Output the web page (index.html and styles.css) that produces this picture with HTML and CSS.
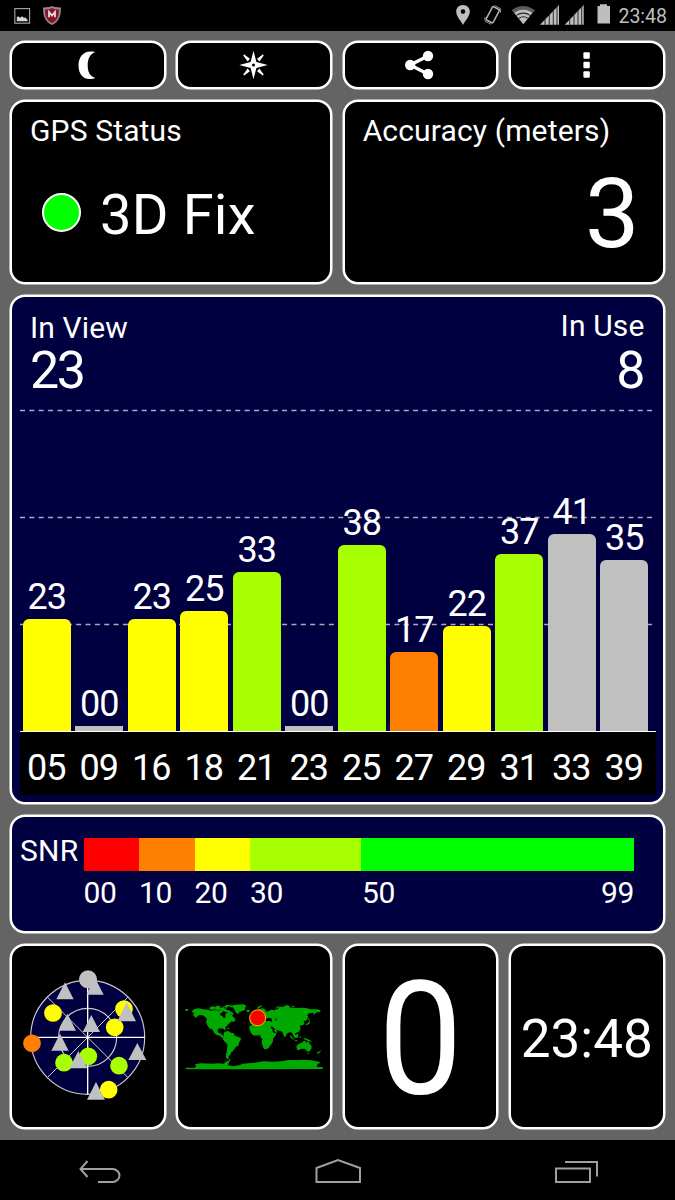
FILE: index.html
```html
<!DOCTYPE html>
<html lang="en">
<head>
<meta charset="utf-8">
<title>GPS Test</title>
<link rel="stylesheet" href="styles.css">
</head>
<body>
<header class="status">
  <svg class="status-left" width="70" height="31" viewBox="0 0 70 31">
    <rect x="14.800" y="8.600" width="14.800" height="14.600" fill="none" stroke="#a8a8a8" stroke-width="1.100"/>
    <path d="M16.800 21.300V17.200l1.300-1 2 1.600 2-1.500 1.700 1.400 1.700-.2 1.300 1.700.8.2v1.900z" fill="#d5d5d5"/>
    <path d="M52 6l2.600 1.100 6.300.3c.3 8.600-2.100 14.200-8.900 17.700-6.800-3.500-9.200-9.100-8.900-17.700l6.300-.3z" fill="#8e8e90"/>
    <path d="M52 8l2.400 1 4.700.4c0 7-2 11-7.100 13.900-5.100-2.900-7.100-6.900-7.100-13.900l4.700-.4z" fill="#8c1428"/>
    <path d="M49 17.200v-5.200l3 3.500 3-3.500v5.200" fill="none" stroke="#ddd" stroke-width="1.800"/>
  </svg>
  <svg class="status-right" width="170" height="31" viewBox="450 0 170 31" fill="#bebebe">
    <path fill-rule="evenodd" d="M463 5c4 0 6.800 2.900 6.800 6.500 0 4.800-4.600 9.200-6.800 13.400-2.200-4.200-6.800-8.600-6.800-13.400C456.200 7.900 459 5 463 5zm0 4.300a2.300 2.300 0 1 0 0 4.600 2.300 2.300 0 0 0 0-4.600z"/>
    <g fill="none" stroke="#b4b4b4">
      <rect x="488.900" y="7.200" width="7.800" height="15" rx="1.200" transform="rotate(28 492.800 14.700)" stroke-width="1.500"/>
      <path d="M494.500 5.500l6 3.200v4M493.500 6.900l5.600 3M485 17v4l6 3.300M486.500 20l5.600 3.300" stroke-width=".8"/>
    </g>
    <path d="M511.500 10.200Q523 1.600 535 10.200L532.600 13Q523 6.200 514 13z" fill="#5b5b5b"/>
    <path d="M514 12.800Q523.300 6.200 532.600 12.800L523.300 24.200z"/>
    <path d="M516.400 15.400q6.900-4.600 13.800 0M519 18.200q4.300-2.800 8.600 0" fill="none" stroke="#222" stroke-width="1.100"/>
    <path d="M540 24.800L559 5v19.800zM564.700 24.800L583.700 5v19.800z"/>
    <path d="M545 17v8M549.300 13v12M553.300 10v15M557 6v19M569.700 17v8M574 13v12M578 10v15M581.700 6v19" stroke="#1b1b1b" stroke-width=".9"/>
    <path d="M597.500 6h2.500V4.200h7V6h3v17.500h-12.500z"/>
  </svg>
  <span class="clock">23:48</span>
</header>

<main class="screen">
  <nav class="row tools">
    <button class="card tool" aria-label="Night mode"><svg width="30" height="30" viewBox="0 0 30 30"><path d="M18 1.500C11 1 5.500 6.500 5.500 15.500S11 30 18 29c1.500 0 3-.3 4.200-1C16.500 26 14.700 21.500 14.700 15.300S16.700 4 22 2.200C20.700 1.600 19.500 1.500 18 1.500z"/></svg></button>
    <button class="card tool" aria-label="Compass"><svg width="30" height="30" viewBox="0 0 30 30"><path fill-rule="evenodd" d="M14.500 .8l2.900 11.300L28.700 15l-11.300 2.900L14.500 29.200l-2.900-11.300L.3 15l11.300-2.900zM14.500 13.500a1.500 1.500 0 1 0 0 3 1.500 1.500 0 0 0 0-3z"/><path d="M4.800 5l5.200 3.800-1.300 1.700zM24.200 5L19 8.800l1.300 1.700zM4.800 25l5.200-3.800-1.300-1.700zM24.200 25L19 21.200l1.300-1.700z" stroke="#fff" stroke-width="1.300"/></svg></button>
    <button class="card tool" aria-label="Share"><svg width="30" height="30" viewBox="0 0 30 30"><path d="M23 6L5 15l18 9" fill="none" stroke="#fff" stroke-width="3.400"/><circle cx="23" cy="6" r="5.200"/><circle cx="5.200" cy="15" r="5.200"/><circle cx="23" cy="24" r="5.200"/></svg></button>
    <button class="card tool" aria-label="More"><svg width="30" height="30" viewBox="0 0 30 30"><rect x="11.400" y="2.200" width="6.400" height="6.600" rx="1"/><rect x="11.400" y="11.700" width="6.400" height="6.600" rx="1"/><rect x="11.400" y="21.200" width="6.400" height="6.600" rx="1"/></svg></button>
  </nav>

  <div class="row halves">
    <section class="card fix">
      <h2 class="label">GPS Status</h2>
      <div class="fix-line"><i class="dot"></i><span class="fix-text">3D Fix</span></div>
    </section>
    <section class="card accuracy">
      <h2 class="label">Accuracy (meters)</h2>
      <div class="accuracy-value">3</div>
    </section>
  </div>

  <section class="card signal">
    <div class="counts">
      <div class="count in-view"><span class="label">In View</span><b>23</b></div>
      <div class="count in-use"><span class="label">In Use</span><b>8</b></div>
    </div>
    <div class="chart">
      <svg class="grid-lines" width="635" height="322" viewBox="0 0 635 322"><path d="M0 1.500H635M0 108.500H635M0 215.500H635"/></svg>
      <div class="bars">
        <div class="sat"><span>23</span><i class="bar yellow" style="height:112px"></i></div>
        <div class="sat"><span>00</span><i class="bar gray flat" style="height:5px"></i></div>
        <div class="sat"><span>23</span><i class="bar yellow" style="height:112px"></i></div>
        <div class="sat"><span>25</span><i class="bar yellow" style="height:120px"></i></div>
        <div class="sat"><span>33</span><i class="bar lime" style="height:159px"></i></div>
        <div class="sat"><span>00</span><i class="bar gray flat" style="height:5px"></i></div>
        <div class="sat"><span>38</span><i class="bar lime" style="height:186px"></i></div>
        <div class="sat"><span>17</span><i class="bar orange" style="height:79px"></i></div>
        <div class="sat"><span>22</span><i class="bar yellow" style="height:105px"></i></div>
        <div class="sat"><span>37</span><i class="bar lime" style="height:177px"></i></div>
        <div class="sat"><span>41</span><i class="bar gray" style="height:197px"></i></div>
        <div class="sat"><span>35</span><i class="bar gray" style="height:171px"></i></div>
      </div>
    </div>
    <div class="ids"><span>05</span><span>09</span><span>16</span><span>18</span><span>21</span><span>23</span><span>25</span><span>27</span><span>29</span><span>31</span><span>33</span><span>39</span></div>
  </section>

  <section class="card snr">
    <span class="snr-title">SNR</span>
    <div class="scale">
      <i class="red"></i><i class="orange"></i><i class="yellow"></i><i class="lime"></i><i class="green"></i>
      <span>00</span><span>10</span><span>20</span><span>30</span><span class="ends">50<em>99</em></span>
    </div>
  </section>

  <div class="row bottom">
    <section class="card tile">
      <svg class="sky" width="140" height="160" viewBox="0 0 420 480">
        <g fill="none" stroke="#c8c8cc" stroke-width="3.500">
          <circle cx="203" cy="247" r="171" fill="#000040"/>
          <circle cx="203" cy="247" r="87"/>
          <path d="M82 126L324 368M324 126L82 368" stroke-width="3"/>
          <path d="M203 76V418M32 247H374" stroke="#fff" stroke-width="4"/>
        </g>
        <g fill="#c0c0c0">
          <path d="M135 82l26 51h-52zM225 68l26 51h-52zM142 176l26 51h-52zM214 180l26 51h-52zM120 236l26 51h-52z"/>
          <circle cx="204" cy="73" r="27"/>
        </g>
        <g fill="#ff0"><circle cx="99" cy="174" r="26.500"/><circle cx="312" cy="162" r="26.500"/><circle cx="284" cy="217" r="26.500"/><circle cx="266" cy="404" r="26.500"/></g>
        <g fill="#a8ff00"><circle cx="132" cy="323" r="26.500"/><circle cx="205" cy="304" r="26.500"/><circle cx="297" cy="332" r="26.500"/></g>
        <circle cx="36" cy="265" r="26.500" fill="#ff8000"/>
        <path d="M320 142l28 57h-56zM175 288l27 52h-54zM352 264l27 51h-54zM228 381l27 53h-54z" fill="#c0c0c0"/>
      </svg>
    </section>
    <section class="card tile">
      <svg class="map" width="138" height="70" viewBox="30 55 414 210">
        <g fill="#00a800">
          <path d="M31 76h9l-3 6h-6zM50 82l8-5 12-3 14 3 16 1 8 3 14-2 12 2 4-6 8 3-3 7-6 3-2 6 8 4 4 6 5-4-2-10 8-2 7 5 5-1 4 7 8 7-4 3 4 3-8 3-4-2-6 5-6 6-7 7 1 8-3 1-4-7-8 2-5-1-4 5 1 7 6 4 5-4-1 7 6 2 0 7 5 3-2 2-9-6-4-5-9-2-8-5-3-7-7-9-1 5-6-7-4-6-4-9 3-9-5-7-8-5-10-1-9 7-9 3 5-5-7-5 5-3z"/>
          <path d="M103 72l8-4 11 2 4-4 12 1-5 4 7 1 5-4 2 6 9 1-4 5 9 2-7 4-10-4-3-5-11 3-10-3-9 2-8-3zM146 70l8-6 18-1-12 5-5 5zM150 78l12 2 10 6 5 6-6 2-5-3-3 4-8-5 3-4-8-3zM164 67l18-4 24-1 8 4-4 7 1 5-9 4-9 2-4 7-5-2-5-10-5-8-10-1zM214 80l5-2 7 3-5 4-6-1z"/>
          <path d="M146 147l8-4 8 0 6 4 8 2 4 7 11 4 7 3-1 6-5 8-2 9-8 4-4 7-6 7-3 1-2 7-5 4-2 7 3 3-6 0-5-5 2-12 3-19 0-9-8-7-6-9 3-7z"/>
          <path d="M132 132l8-1 8 3 4 3-7-1-5-3zM154 132l8 1 3 3-8-1z"/>
          <path d="M222 132l4-6 8-5 10-1 10 0 6 5 9-2 9 3 6 0 2 6 5 9 6 7 8-1-3 8-8 10 0 8-6 6-3 8-5 7-7 3-6-1-5-11-2-11 2-7-5-7-1-5-8 0-7 1-8-2-6-8zM287 175l5-6 1 6-5 9-4 0zM279 122l12-2 7 7 6 3-2 7-11 4-6-8zM223 110l8 0 6 4-2 7-9-1z"/>
          <path d="M226 104l5-8 6-6 8-4 3-6 7-5 9-1 8 5 2 5 7-1 7-5 9 2 11-4 5-6 12-1 10-5 9 3-1 4 12 1 14 1 12-1 15 2 12 3 19 0 10 3-2 5-8 0-6 4-5 5-1-7-11 2-7 4 2 7-3 8-6 4-5-1 4 8-5 6-7-1-2 6 2 7-6 8-9 3-2 4 6 7-4 5-5-4-2-6-6-8-9 1-6 5-2 9-5-3-5-13-8-4-10-2 4 8-7-2-7-9 1-5-9-2-5 4-6 2-8-1-7-7-7 6 0-6-8 2-5 4-7-2z"/>
          <path d="M245 77l4-7 8-5-3 8zM251 67l8-1 4 2-8 2zM300 75l6-6 12-2-11 6zM347 66l9 1 5 3-9-1zM401 101l3 7-4 2zM391 122l8-4 5-8 1 8-9 7zM345 154l9 9 4 6-5-2-8-8zM359 169l9 1-2 3-7-2zM361 155l5-5 5 5-3 8-6-2zM373 145l3 6-2 1zM372 160l8-1-4 5zM384 163l8 1 14 6 4 5-10-3-9-3z"/>
          <path d="M364 187l8-7 7-2 7-6 6 1 2 5 6-7 3 8 7 8-1 10-7 7-6-1-6-7-10-1-8 4-6-1zM396 207l7 0-2 5zM424 207l10-4 3-4-1 7-9 4z"/>
          <path d="M32 257v-5h27l5-5-4-5 18-3 35 1 18-1 14 2 8-7 7-3 3-4 4 1-6 9-2 8 15 3 18-3 12-5 35-3 26-4 30 1 25-1 20-4 20 0 25-1 25 2 22 4 4 3-9 5-1 8h17v6z"/>
        </g>
        <path d="M271 105l12-3 7 3 1 9-10-3-10 2zM287 132l9 8 5-2-11-10zM303 102l3 9-5-2z" fill="#000"/>
        <circle cx="248" cy="102.500" r="24" fill="red" stroke="#f4c400" stroke-width="3"/>
      </svg>
    </section>
    <section class="card tile speed"><span>0</span></section>
    <section class="card tile time">23:48</section>
  </div>
</main>

<footer class="navbar">
  <svg width="46" height="28" viewBox="77 1157 46 28"><path d="M87.500 1161l-7 8 7 8M80.500 1169H112.500a7 6.500 0 0 1 0 13H98"/></svg>
  <svg width="48" height="28" viewBox="314 1157 48 28"><path d="M316.500 1182V1168L338 1160l22 8V1182z"/></svg>
  <svg width="48" height="28" viewBox="552 1157 48 28"><path d="M556 1168.500H590V1182H556zM565 1162H597V1176.500"/></svg>
</footer>
</body>
</html>
```

FILE: styles.css
```css
* { box-sizing: border-box; }

body {
  margin: 0;
  width: 675px;
  height: 1200px;
  background: #000;
  color: #fff;
  font-family: Roboto, "Liberation Sans", sans-serif;
  overflow: hidden;
}

svg { display: block; flex: none; }

.status {
  height: 31px;
  display: flex;
  justify-content: space-between;
}
.status-right { margin-left: auto; }
.clock {
  width: 55px;
  padding-right: 8px;
  display: flex;
  justify-content: flex-end;
  font-size: 19.500px;
  line-height: 34px;
  color: #bebebe;
  white-space: nowrap;
}

.screen {
  height: 1109px;
  padding: 10px 10.500px 0 10px;
  background: #646464;
  display: grid;
  grid-template-rows: 48px 184px 509px 118px 185px;
  row-gap: 11px;
}

.row { display: grid; column-gap: 10.800px; }
.tools, .bottom { grid-template-columns: repeat(4, minmax(0, 1fr)); }
.halves { grid-template-columns: repeat(2, minmax(0, 1fr)); }

.card {
  background: #000;
  border: 2px solid #fff;
  border-radius: 15px;
  box-shadow: 0 0 0 .5px #fff;
  min-width: 0;
}

.tool {
  display: flex;
  align-items: center;
  justify-content: center;
  padding: 0;
}
.tool svg { fill: #fff; }

.label {
  display: block;
  margin: 0;
  font-size: 30px;
  font-weight: 400;
  line-height: 36px;
  letter-spacing: .15px;
  white-space: nowrap;
}

.fix, .accuracy { padding: 11px 18px; }
.fix-line {
  display: flex;
  align-items: center;
  gap: 19px;
  margin: 29px 0 0 12px;
}
.dot {
  width: 39px;
  height: 39px;
  border: 2px solid #fff;
  border-radius: 50%;
  background: #0f0;
}
.fix-text {
  font-size: 56px;
  line-height: 64px;
  letter-spacing: .2px;
  margin-top: 5px;
}
.accuracy-value {
  font-size: 97px;
  line-height: 100px;
  margin-top: 15px;
  padding-right: 5px;
  text-align: right;
}

.signal, .snr { background: #000040; }
.signal { padding: 0 7px 0 8px; }
.counts {
  height: 112px;
  padding: 13px 11px 0 10px;
  display: flex;
  justify-content: space-between;
}
.count b {
  display: block;
  font-size: 52px;
  font-weight: 400;
  line-height: 50px;
}
.in-view b { letter-spacing: -2.500px; }
.in-use { text-align: right; margin: -2px -1px 0 0; }
.in-use .label { padding-right: 1px; }
.in-use b { margin-top: 2px; }

.chart { height: 323px; display: grid; border-bottom: 1px solid #fff; }
.grid-lines, .bars { grid-area: 1 / 1; }
.grid-lines path {
  fill: none;
  stroke: #aaaabc;
  stroke-width: 1.500px;
  stroke-dasharray: 5 4.360;
}
.bars {
  display: grid;
  grid-template-columns: repeat(12, 52.500px);
  align-items: end;
  padding-left: .4px;
}
.sat { text-align: center; font-size: 36px; letter-spacing: -1.100px; }
.sat span { display: block; line-height: 44px; }
.bar {
  display: block;
  width: 48px;
  margin: 0 auto;
  border-radius: 6px 6px 0 0;
}
.flat { border-radius: 0; }
.red { background: #f00; }
.orange { background: #ff8000; }
.yellow { background: #ff0; }
.lime { background: #a8ff00; }
.green { background: #0f0; }
.gray { background: #c0c0c0; }

.ids {
  height: 63px;
  background: #000;
  display: grid;
  grid-template-columns: repeat(12, 52.500px);
  text-align: center;
  font-size: 36px;
  letter-spacing: -1.100px;
  line-height: 72px;
}

.snr {
  display: flex;
  padding: 21px 28px 0 8px;
  font-size: 30px;
}
.snr-title { width: 63.500px; line-height: 26px; letter-spacing: .3px; }
.scale {
  flex: none;
  display: grid;
  grid-template-columns: 55.500px 55.500px 55.500px 111px 273px;
  grid-template-rows: 33px 42px;
  line-height: 43px;
  letter-spacing: -.3px;
}
.ends { display: flex; justify-content: space-between; padding-left: 1px; }
.ends em { font-style: normal; }

.tile {
  height: 185px;
  display: flex;
  align-items: center;
  justify-content: center;
}
.sky { margin: -3px 0 0 4px; }
.map { margin-top: 1px; }
.speed { font-size: 158px; line-height: 176px; }
.speed span { padding-top: 5px; transform: scaleX(.95); }
.time { font-size: 53px; padding-top: 4px; }

.navbar {
  height: 60px;
  padding: 2px 75px 0 77px;
  display: flex;
  align-items: center;
  justify-content: space-between;
}
.navbar path {
  fill: none;
  stroke: #a0a0a0;
  stroke-width: 2px;
}
```
